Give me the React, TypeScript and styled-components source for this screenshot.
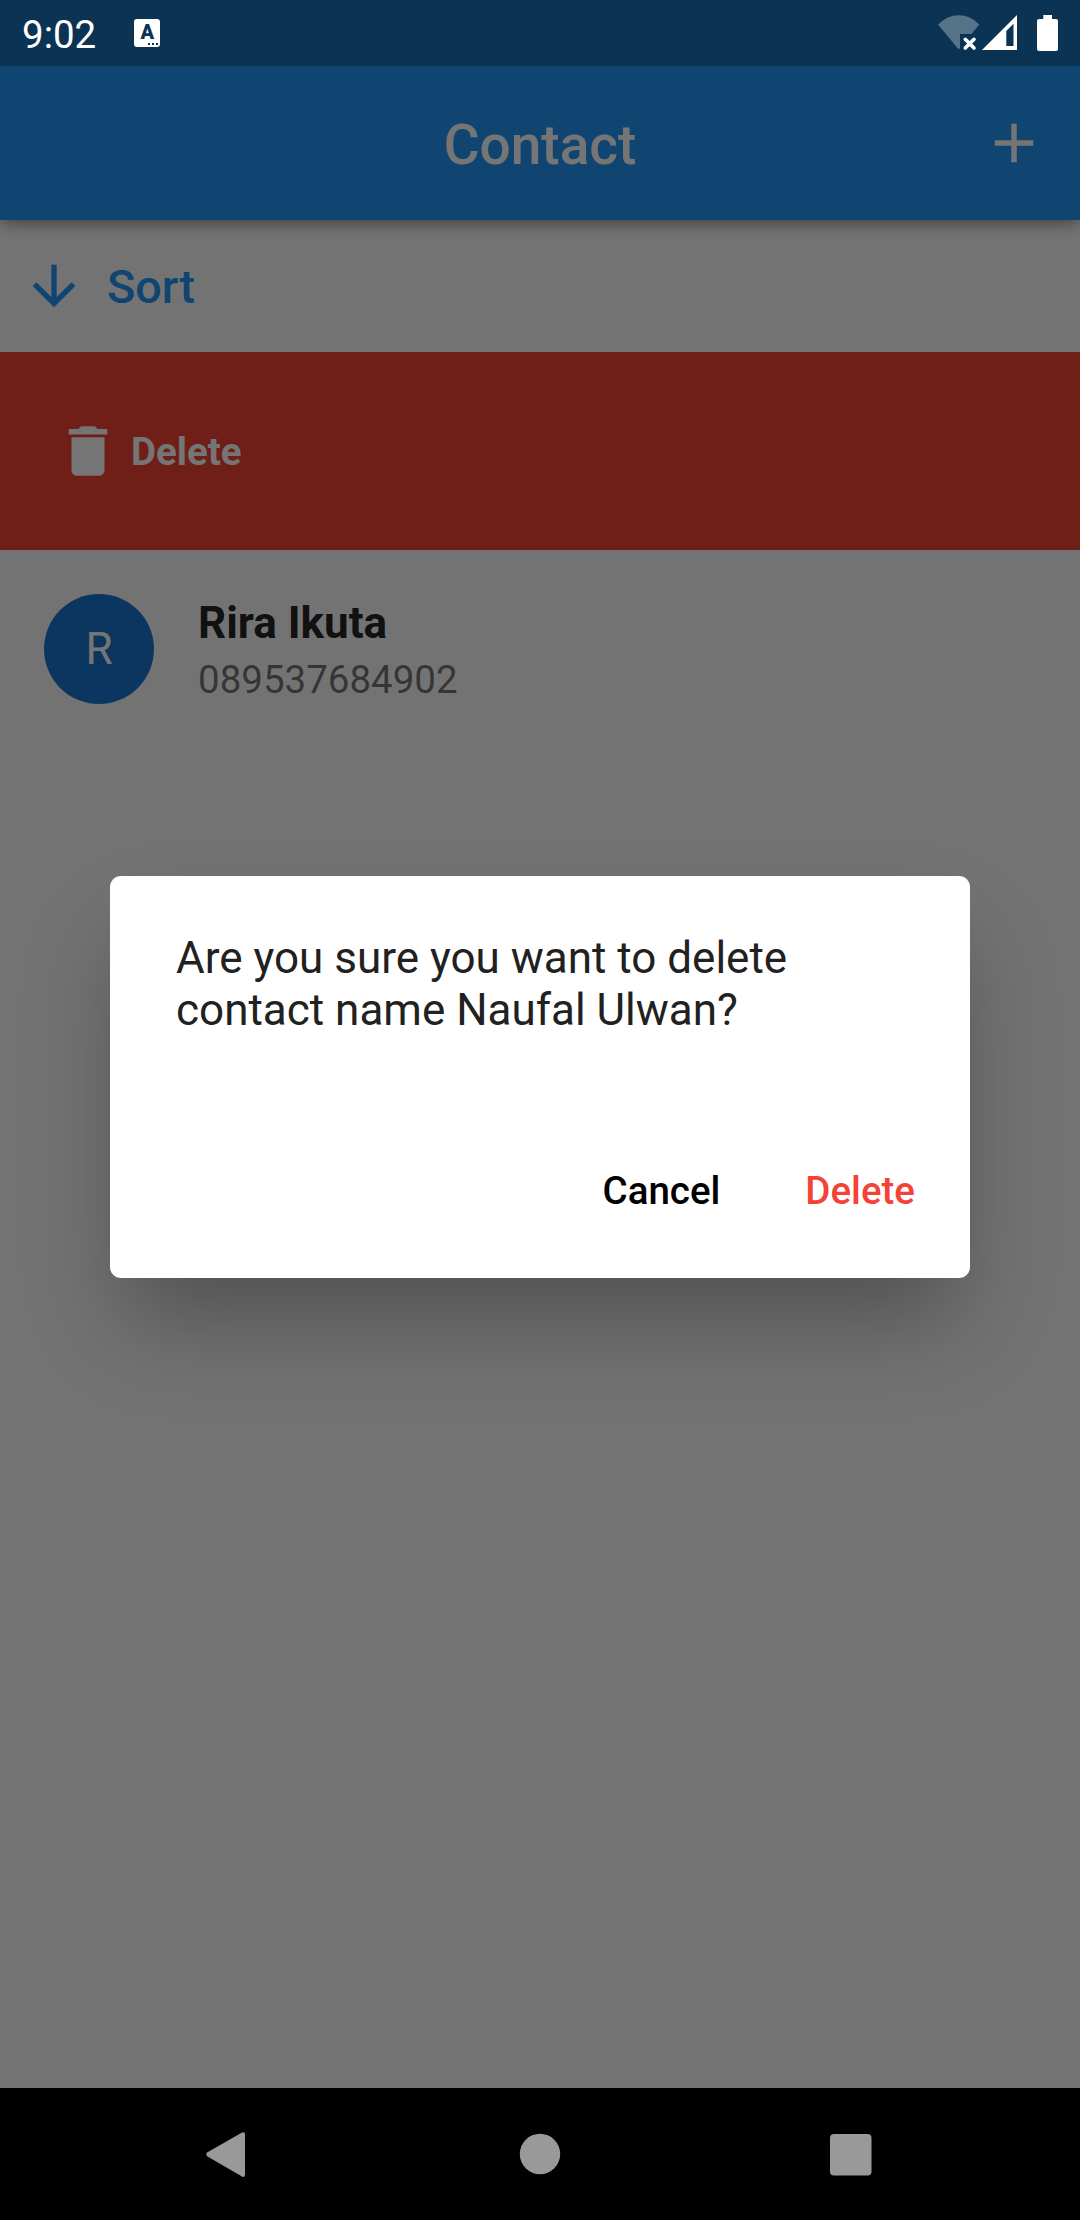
import React from "react";
import styled, { createGlobalStyle } from "styled-components";

const GlobalStyle = createGlobalStyle`
  *, *::before, *::after { box-sizing: border-box; }
  body { margin: 0; background: #000; }
  button { border: 0; padding: 0; margin: 0; background: none; font: inherit; color: inherit; }
  svg { display: block; flex: none; }
`;

const Screen = styled.div`
  width: 1080px;
  height: 2220px;
  display: flex;
  flex-direction: column;
  overflow: hidden;
  font-family: Roboto, "Liberation Sans", sans-serif;
  font-size: 44px;
  line-height: 1.172;
  color: #212121;
`;

const StatusBar = styled.header`
  flex: none;
  height: 66px;
  padding: 0 20px 0 22px;
  display: flex;
  align-items: center;
  justify-content: space-between;
  background: #0b3354;
  color: #fff;
`;

const StatusGroup = styled.div`
  display: flex;
  align-items: center;
`;

const Clock = styled.span`
  font-size: 38.5px;
  line-height: 46px;
  padding-top: 4px;
`;

const InputBadge = styled.span`
  width: 26px;
  height: 28px;
  margin-left: 38px;
  border-radius: 3px;
  background: #fff;
  color: #0b3354;
  display: flex;
  flex-direction: column;
  align-items: center;
  font-size: 20px;
  font-weight: 900;
  line-height: 24px;
  padding-top: 1px;
`;

const BadgeDots = styled.span`
  display: flex;
  gap: 2px;
  align-self: flex-end;
  margin: -1px 2px 0 0;

  i {
    width: 2px;
    height: 2px;
    background: #0b3354;
  }
`;

const Page = styled.main`
  position: relative;
  flex: 1;
  display: flex;
  flex-direction: column;
  background: #fafafa;
`;

const AppBar = styled.div`
  position: relative;
  z-index: 1;
  flex: none;
  height: 154px;
  padding: 0 33px;
  display: grid;
  grid-template-columns: 66px 1fr 66px;
  align-items: center;
  background: #2196f3;
  color: #fff;
  box-shadow: 0 7px 12px -2px rgba(0, 0, 0, 0.32), 0 2px 22px 0 rgba(0, 0, 0, 0.05);
`;

const Title = styled.h1`
  grid-column: 2;
  margin: 0;
  padding-top: 3px;
  text-align: center;
  font-size: 55px;
  font-weight: 500;
  line-height: 64px;
`;

const SortBar = styled.button`
  flex: none;
  height: 132px;
  padding-left: 22px;
  display: flex;
  align-items: center;
  gap: 21px;
  color: #2196f3;
  font-size: 46.75px;
  font-weight: 500;
`;

const DismissRow = styled.div`
  flex: none;
  height: 198px;
  padding-left: 55px;
  display: flex;
  align-items: center;
  gap: 10px;
  background: #f44336;
  color: #fff;
  font-size: 38.5px;
  font-weight: 700;
`;

const Label = styled.span`
  padding-top: 2px;
`;

const ContactRow = styled.div`
  flex: none;
  height: 198px;
  padding: 0 44px;
  display: flex;
  align-items: center;
  gap: 44px;
`;

const Avatar = styled.div`
  width: 110px;
  height: 110px;
  padding-top: 2px;
  border-radius: 50%;
  display: flex;
  align-items: center;
  justify-content: center;
  background: #1976d2;
  color: #fff;
`;

const ContactText = styled.div`
  display: flex;
  flex-direction: column;
  gap: 8px;
  padding-top: 2px;
`;

const Name = styled.span`
  font-weight: 700;
  color: rgba(0, 0, 0, 0.87);
`;

const Phone = styled.span`
  font-size: 38.5px;
  color: rgba(0, 0, 0, 0.54);
`;

const Scrim = styled.div`
  position: absolute;
  inset: 0;
  z-index: 2;
  display: flex;
  align-items: center;
  justify-content: center;
  background: rgba(0, 0, 0, 0.54);
`;

const Dialog = styled.section`
  width: 860px;
  height: 401.5px;
  padding: 57px 33px 33px 66px;
  display: flex;
  flex-direction: column;
  justify-content: space-between;
  border-radius: 11px;
  background: #fff;
  box-shadow: 0 54px 90px -15px rgba(0, 0, 0, 0.3);
`;

const Message = styled.p`
  margin: 0;
  color: #212121;
`;

const Actions = styled.div`
  display: flex;
  justify-content: flex-end;
  gap: 41px;
`;

const Action = styled.button<{ $danger?: boolean }>`
  height: 108px;
  padding: 0 22px;
  font-size: 38.5px;
  font-weight: 500;
  color: ${(p) => (p.$danger ? "#f44336" : "#000")};
`;

const NavBar = styled.nav`
  flex: none;
  height: 132px;
  padding: 0 184px;
  display: flex;
  align-items: center;
  justify-content: space-between;
  background: #000;
`;

function MaterialIcon({ d, size = 66 }: { d: string; size?: number }) {
  return (
    <svg width={size} height={size} viewBox="0 0 24 24" fill="currentColor">
      <path d={d} />
    </svg>
  );
}

const PLUS = "M19 13h-6v6h-2v-6H5v-2h6V5h2v6h6v2z";
const ARROW_DOWN = "M20 12l-1.41-1.41L13 16.17V4h-2v12.17l-5.58-5.59L4 12l8 8 8-8z";
const TRASH =
  "M6 19c0 1.1.9 2 2 2h8c1.1 0 2-.9 2-2V7H6v12zM19 4h-3.5l-1-1h-5l-1 1H5v2h14V4z";

function StatusIcons() {
  return (
    <svg width="124" height="66" viewBox="936 0 124 66">
      <path
        d="M938 24.5Q947 15.3 958.7 15.3T979.3 24.5L971.5 34H960V48L958.7 49.5Z"
        fill="#577388"
      />
      <path d="M965.3 39.3L974 48M974 39.3L965.3 48" stroke="#fff" strokeWidth="3.6" strokeLinecap="round" />
      <path
        fillRule="evenodd"
        fill="#fff"
        d="M982 50L1017 15V50ZM1006.3 31V46H1013.5V23.8Z"
      />
      <path
        d="M1043.3 15H1052V19H1056Q1058 19 1058 21V49Q1058 51 1056 51H1039Q1037 51 1037 49V21Q1037 19 1039 19H1043.3Z"
        fill="#fff"
      />
    </svg>
  );
}

export default function App() {
  return (
    <Screen>
      <GlobalStyle />
      <StatusBar>
        <StatusGroup>
          <Clock>9:02</Clock>
          <InputBadge>
            A
            <BadgeDots>
              <i />
              <i />
              <i />
            </BadgeDots>
          </InputBadge>
        </StatusGroup>
        <StatusIcons />
      </StatusBar>

      <Page>
        <AppBar>
          <Title>Contact</Title>
          <MaterialIcon d={PLUS} />
        </AppBar>
        <SortBar>
          <MaterialIcon d={ARROW_DOWN} size={64} />
          <Label>Sort</Label>
        </SortBar>
        <DismissRow>
          <MaterialIcon d={TRASH} />
          <Label>Delete</Label>
        </DismissRow>
        <ContactRow>
          <Avatar>R</Avatar>
          <ContactText>
            <Name>Rira Ikuta</Name>
            <Phone>089537684902</Phone>
          </ContactText>
        </ContactRow>

        <Scrim>
          <Dialog role="dialog">
            <Message>
              Are you sure you want to delete
              <br />
              contact name Naufal Ulwan?
            </Message>
            <Actions>
              <Action>Cancel</Action>
              <Action $danger>Delete</Action>
            </Actions>
          </Dialog>
        </Scrim>
      </Page>

      <NavBar>
        <svg width="84" height="66" viewBox="184 2121 84 66" fill="#999">
          <path d="M207.5 2152.3L242 2132.6Q245 2131.2 245 2134.5V2174.5Q245 2178 242 2176.4L207.5 2156.4Q205 2154.4 207.5 2152.3Z" />
        </svg>
        <svg width="84" height="66" viewBox="0 0 84 66" fill="#999">
          <circle cx="42" cy="33" r="20.2" />
        </svg>
        <svg width="84" height="66" viewBox="812 2121 84 66" fill="#999">
          <rect x="830" y="2134" width="41.5" height="41.5" rx="4" />
        </svg>
      </NavBar>
    </Screen>
  );
}
